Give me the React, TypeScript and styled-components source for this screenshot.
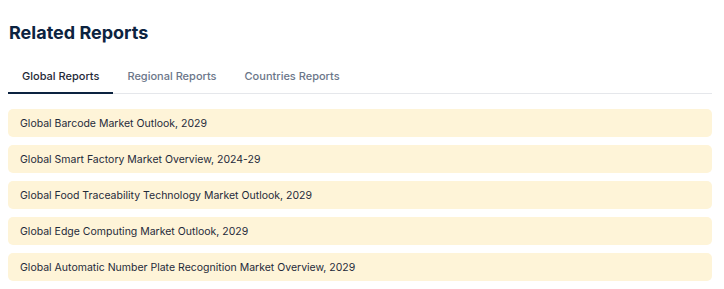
import React, { useState } from 'react';
import styled, { createGlobalStyle } from 'styled-components';

const GlobalStyle = createGlobalStyle`
  body {
    margin: 0;
    background: #fff;
    font-family: Inter, "Noto Sans", sans-serif;
  }
`;

const tabs = ['Global Reports', 'Regional Reports', 'Countries Reports'];

const reports = [
  'Global Barcode Market Outlook, 2029',
  'Global Smart Factory Market Overview, 2024-29',
  'Global Food Traceability Technology Market Outlook, 2029',
  'Global Edge Computing Market Outlook, 2029',
  'Global Automatic Number Plate Recognition Market Overview, 2029',
];

function App() {
  const [active, setActive] = useState(0);

  return (
    <Wrapper>
      <GlobalStyle />
      <Title>Related Reports</Title>
      <TabBar>
        {tabs.map((tab, i) => (
          <Tab key={tab} type="button" $active={i === active} onClick={() => setActive(i)}>
            {tab}
          </Tab>
        ))}
      </TabBar>
      <List>
        {reports.map(report => (
          <Item key={report}>{report}</Item>
        ))}
      </List>
    </Wrapper>
  );
}

export default App;

const Wrapper = styled.div`
  width: 704px;
  padding: 21px 0 0 8px;
`;

const Title = styled.h2`
  margin: 0 0 0 1px;
  font-size: 18px;
  line-height: 24px;
  font-weight: 700;
  color: #0c2340;
`;

const TabBar = styled.div`
  display: flex;
  margin-top: 24px;
  border-bottom: 1px solid #e5e7eb;
`;

const Tab = styled.button<{ $active: boolean }>`
  padding: 0 14px 8px;
  margin-bottom: -1px;
  border: none;
  border-bottom: 2px solid ${p => (p.$active ? '#0c2340' : 'transparent')};
  background: none;
  font-family: Inter, "Noto Sans", sans-serif;
  font-size: 11px;
  line-height: 15px;
  font-weight: 500;
  color: ${p => (p.$active ? '#1f2937' : '#6b7689')};
  cursor: pointer;
`;

const List = styled.div`
  display: flex;
  flex-direction: column;
  gap: 8px;
  margin-top: 15px;
`;

const Item = styled.div`
  height: 28px;
  display: flex;
  align-items: center;
  padding: 0 12px;
  border-radius: 5px;
  background: #fef4d8;
  font-size: 10.5px;
  color: #1f2a3a;
`;
